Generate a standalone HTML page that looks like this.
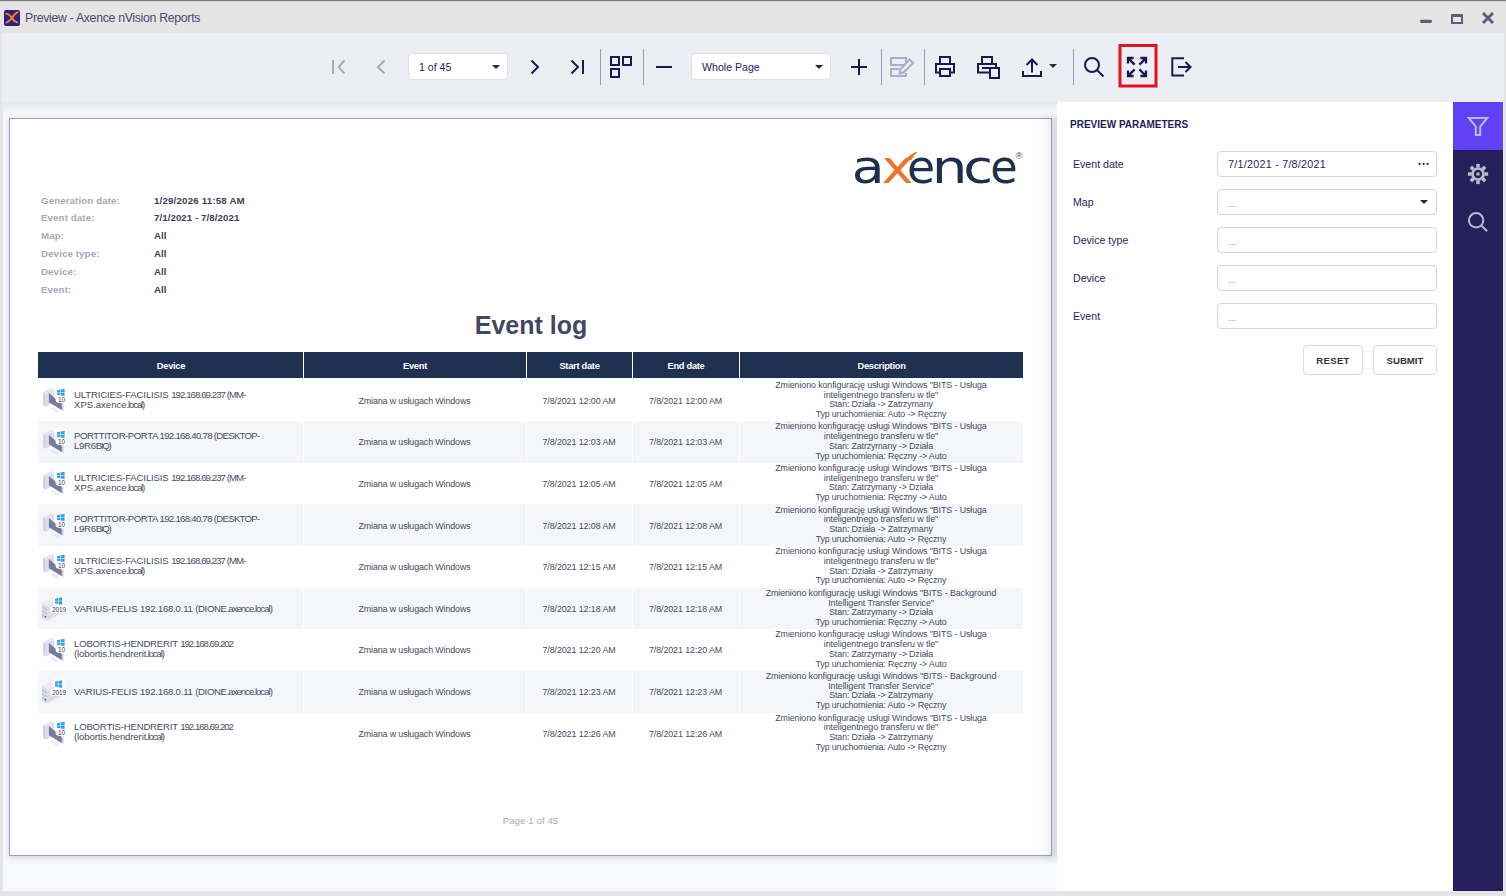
<!DOCTYPE html>
<html lang="en">
<head>
<meta charset="utf-8">
<title>Preview - Axence nVision Reports</title>
<style>
*{box-sizing:border-box;margin:0;padding:0}
html,body{width:1506px;height:896px;overflow:hidden}
body{position:relative;background:#e5e5e5;font-family:"Liberation Sans",sans-serif;color:#2a2456}
.abs{position:absolute}
/* title bar */
#topline{left:0;top:0;width:1506px;height:2px;background:linear-gradient(#6e6e6e,#8a8a8a 45%,#dadada 80%,#e5e5e5)}
#titlebar{left:0;top:2px;width:1506px;height:31px;background:#e5e5e5}
#appicon{left:4px;top:10px;width:16px;height:16px;border-radius:2px;background:#2a2180}
#title{left:25px;top:10px;font-size:12.3px;line-height:16px;color:#4d4574;white-space:nowrap;letter-spacing:-0.31px}
/* toolbar */
#toolbar{left:2px;top:33px;width:1502px;height:858px;background:#eceef4}
#lstrip{left:2px;top:102px;width:1px;height:789px;background:#e7e8ec}
.combo{position:absolute;top:53px;height:27px;background:#fff;border:1px solid #dfe0e8;border-radius:4px;font-size:10.6px;line-height:27px;color:#2a2456;padding-left:9px;white-space:nowrap}
.caret{position:absolute;width:0;height:0;border-left:4px solid transparent;border-right:4px solid transparent;border-top:4.5px solid #2b2b33}
.sep{position:absolute;top:49px;width:1px;height:36px;background:#9a99b8}
svg.ic{position:absolute;overflow:visible}
/* doc area */
#docarea{left:3px;top:102px;width:1054px;height:789px;background:#f8f9fe}
#docshadow{left:3px;top:102px;width:1054px;height:14px;background:linear-gradient(#e6e8ef,#f0f1f7 45%,#f8f9fe)}
#rshadow{left:1035px;top:112px;width:22px;height:752px;background:linear-gradient(90deg,rgba(110,115,140,0),rgba(110,115,140,.05) 50%,rgba(110,115,140,.2));-webkit-mask-image:linear-gradient(180deg,transparent,#000 8px,#000 calc(100% - 9px),transparent);mask-image:linear-gradient(180deg,transparent,#000 8px,#000 calc(100% - 9px),transparent)}
#page{left:9px;top:118px;width:1043px;height:738px;background:#fff;border:1px solid #9fa1a7;box-shadow:0 0 6px rgba(150,155,175,.2), 0 3px 6px rgba(150,155,175,.2)}
/* report */
.lbl,.val{position:absolute;font-weight:bold;font-size:9.7px;line-height:12px;white-space:nowrap}
.lbl{left:41px;color:#a6a9b8;letter-spacing:0.12px}
.val{left:154px;color:#3b3f58;letter-spacing:0.03px}
#rtitle{left:331px;top:309.7px;width:400px;text-align:center;font-weight:bold;font-size:25px;letter-spacing:0;line-height:30px;color:#444761;white-space:nowrap}
#thead{left:38px;top:352px;width:985px;height:26px;background:#1f3150}
.th{position:absolute;top:1px;height:26px;line-height:27px;text-align:center;color:#fff;font-weight:bold;font-size:9.3px;white-space:nowrap;letter-spacing:-0.28px;padding-left:1px}
.vs{position:absolute;top:0;width:1px;height:26px;background:#fff}
.row{position:absolute;left:38px;width:985px;background:#fff}
.row.alt{background:#f5f6f9}
.c{position:absolute;top:0;height:100%;color:#474b62;font-size:8.9px;white-space:nowrap}
.row.alt .c{box-shadow:inset 1px 0 0 #fff}
.row.alt .c1{box-shadow:none}
.c1{left:0;width:265px}
.c2{left:265px;width:223px}
.c3{left:488px;width:106px}
.c4{left:594px;width:107px}
.c5{left:701px;width:284px}
.c2 span,.c3 span,.c4 span{position:absolute;left:0;width:100%;text-align:center;line-height:10px}
.c2 span{letter-spacing:-0.114px}
.c3 span,.c4 span{letter-spacing:-0.076px}
.dicon{position:absolute;left:4px}
.dev{position:absolute;left:36px;font-size:9.6px;line-height:10px}
.desc{position:absolute;left:0;width:100%;text-align:center;line-height:9.73px}
.desc div{height:9.73px}
#pfoot{left:330.5px;top:815px;width:400px;text-align:center;font-size:9.6px;line-height:12px;color:#a9acba;letter-spacing:0.1px}
/* right panel */
#panel{left:1057px;top:102px;width:396px;height:789px;background:#fff}
#ptitle{left:1070px;top:119.4px;font-weight:bold;font-size:10px;line-height:12px;color:#231d54;letter-spacing:0;white-space:nowrap}
.plabel{position:absolute;left:1073px;font-size:10.6px;line-height:14px;color:#2a2456;white-space:nowrap}
.pin{position:absolute;left:1217px;width:220px;height:26px;border:1px solid #d6d6dc;border-radius:4px;background:#fff;font-size:10.8px;line-height:24px;padding-left:10px;color:#2a2456;white-space:nowrap;letter-spacing:0.23px}
.pin.ph{color:#7d7d94;font-size:9px;line-height:28px}
.btn{position:absolute;top:345px;height:30px;border:1px solid #d9d9de;border-radius:4px;background:#fff;font-weight:bold;font-size:9.6px;line-height:29px;text-align:center;color:#333;letter-spacing:0.3px}
/* side bar */
#sidebar{left:1453px;top:102px;width:50px;height:789px;background:#271f5c}
#sideactive{left:1453px;top:102px;width:50px;height:48px;background:#6041f3}
</style>
</head>
<body>
<div class="abs" id="titlebar"></div>
<div class="abs" id="topline"></div>
<div class="abs" id="appicon"><svg width="16" height="16" viewBox="0 0 16 16"><path d="M2.2 3.6 C5 4.2 7 6.2 8 8 C9 9.8 11 11.8 13.2 12.4 M2.4 12.6 C5 11.6 6.8 9.8 8 8 C9.3 6 11.2 3.4 13.6 2.2" stroke="#ff7a1a" stroke-width="1.9" fill="none" stroke-linecap="round"/></svg></div>
<div class="abs" id="title">Preview - Axence nVision Reports</div>
<!-- window controls -->
<svg class="ic" style="left:1416px;top:8px" width="84" height="20" viewBox="1416 8 84 20">
<rect x="1420" y="19.8" width="12" height="3.2" rx="1.4" fill="#5b5f78"/>
<path d="M1451 14 h12 v10 h-12 Z M1453 17 v5 h8 v-5 Z" fill="#5b5f78" fill-rule="evenodd"/>
<path d="M1483 13 L1493 23 M1493 13 L1483 23" stroke="#5b5f78" stroke-width="3" fill="none"/>
</svg>

<div class="abs" id="toolbar"></div>
<!-- toolbar icons -->
<svg class="ic" style="left:300px;top:40px" width="920" height="56" viewBox="300 40 920 56" fill="none" stroke="#1f1752" stroke-width="2">
 <g stroke="#a9a7c6">
  <path d="M333 60 V74 M344.5 60.5 L338.5 67 L344.5 73.5"/>
  <path d="M384.5 60.5 L378 67 L384.5 73.5"/>
 </g>
 <path d="M531.5 60.5 L538 67 L531.5 73.5"/>
 <path d="M571.5 60.5 L578 67 L571.5 73.5 M583 60 V74"/>
 <rect x="611" y="57" width="8" height="8"/><rect x="623" y="57" width="8" height="8"/><rect x="611" y="69" width="8" height="8"/>
 <path d="M656 67 H672"/>
 <path d="M851 67 H867 M859 59 V75"/>
 <g stroke="#adabc9">
  <rect x="891" y="58" width="15" height="7"/><path d="M899 69 H891 V76 H906 V73"/>
  <path d="M909.5 59.5 L913 63 L903.5 72.5 L899.5 73.5 L900.5 69 Z" fill="#eceef4"/>
 </g>
 <path d="M940 63.5 V57 H950 V63.5 M940 72.5 H936 V64 H954 V72.5 H950 M940 69 H950 V76 H940 Z"/>
 <path d="M982 63.5 V57 H992 V63.5 M990 72.5 H978 V64 H996 V68 M982 68 H989"/>
 <rect x="990" y="68" width="9" height="10" fill="#eceef4"/>
 <path d="M1023 71 V76 H1041 V71 M1032 72.5 V59.5 M1026.5 65 L1032 59.5 L1037.5 65"/>
 <circle cx="1092" cy="65" r="7"/><path d="M1097 70 L1103.5 76.5"/>
 <rect x="1120" y="45.5" width="36" height="40.5" stroke="#e2141a" stroke-width="3"/>
 <path stroke-width="2.3" d="M1128 63.6 V58 H1133.6 M1128.6 58.6 L1134.6 64.6 M1140.4 58 H1146 V63.6 M1145.4 58.6 L1139.4 64.6 M1128 70.4 V76 H1133.6 M1128.6 75.4 L1134.6 69.4 M1146 70.4 V76 H1140.4 M1145.4 75.4 L1139.4 69.4"/>
 <path d="M1184 58.3 H1172.3 V75.5 H1184 M1178 67 H1190.5 M1185.5 62 L1190.5 67 L1185.5 72"/>
</svg>
<div class="sep" style="left:600px"></div>
<div class="sep" style="left:643px"></div>
<div class="sep" style="left:881px"></div>
<div class="sep" style="left:924px"></div>
<div class="sep" style="left:1073px"></div>
<div class="combo" style="left:408px;width:99.5px;padding-left:10px">1 of 45</div>
<div class="caret" style="left:491.5px;top:65px"></div>
<div class="combo" style="left:691px;width:139.5px;padding-left:10px">Whole Page</div>
<div class="caret" style="left:814.5px;top:65px"></div>
<div class="caret" style="left:1049px;top:64px"></div>

<!-- document area -->
<div class="abs" id="lstrip"></div>
<div class="abs" id="docarea"></div>
<div class="abs" id="docshadow"></div>
<div class="abs" id="page"></div>
<div class="abs" id="rshadow"></div>

<!-- logo -->
<svg class="ic" style="left:845px;top:140px" width="190" height="56" viewBox="845 140 190 56" font-family="DejaVu Sans, Liberation Sans, sans-serif" font-weight="400" font-size="46.8">
 <text transform="translate(851.66 182.5) scale(1.145 1)" fill="#1e2f4e">a</text>
 <text transform="translate(907.09 182.5) scale(0.971 1)" fill="#1e2f4e">e</text>
 <text transform="translate(931.68 182.5) scale(1.205 1)" fill="#1e2f4e">n</text>
 <text transform="translate(963.32 182.5) scale(1.16 1)" fill="#1e2f4e">c</text>
 <text transform="translate(990.35 182.5) scale(0.95 1)" fill="#1e2f4e">e</text>
 <text transform="translate(881.49 182.5) scale(1.154 1)" fill="#e8762c">x</text>
 <path d="M904.6 160.2 L911.2 160.2 C913 157 915 154.4 917.2 152.6 L916.6 151.7 C912 153.4 908 156.4 904.6 160.2 Z" fill="#e8762c"/>
 <text x="1015.6" y="159.4" font-family="Liberation Sans, sans-serif" font-size="9.5" fill="#3a4a66">®</text>
</svg>

<div class="lbl" style="top:195px">Generation date:</div><div class="val" style="top:195px;letter-spacing:0.19px">1/29/2026 11:58 AM</div>
<div class="lbl" style="top:212px">Event date:</div><div class="val" style="top:212px;letter-spacing:0.07px">7/1/2021 - 7/8/2021</div>
<div class="lbl" style="top:230px">Map:</div><div class="val" style="top:230px">All</div>
<div class="lbl" style="top:248px">Device type:</div><div class="val" style="top:248px">All</div>
<div class="lbl" style="top:266px">Device:</div><div class="val" style="top:266px">All</div>
<div class="lbl" style="top:284px">Event:</div><div class="val" style="top:284px">All</div>

<div class="abs" id="rtitle">Event log</div>
<div class="abs" id="thead">
 <div class="th" style="left:0;width:265px">Device</div>
 <div class="th" style="left:265px;width:223px">Event</div>
 <div class="th" style="left:488px;width:106px">Start date</div>
 <div class="th" style="left:594px;width:107px">End date</div>
 <div class="th" style="left:701px;width:284px">Description</div>
 <div class="vs" style="left:265px"></div><div class="vs" style="left:488px"></div><div class="vs" style="left:594px"></div><div class="vs" style="left:701px"></div>
</div>
<div class="row" style="top:378px;height:43px">
<div class="c c1"><svg class="dicon" style="top:8.00px" width="30" height="30" viewBox="0 0 30 30">
<polygon points="1.1,6 9.2,2 11.9,3.5 3.8,7.7" fill="#e6e7f1"/>
<polygon points="1.1,6 3.8,7.7 3.8,20.8 1.1,19" fill="#cfd0e2"/>
<polygon points="3.8,7.7 11.9,3.5 11.9,16 3.8,20.8" fill="#dcdded"/>
<polygon points="8,22.6 10.6,21 17.2,25.2 14.6,26.8" fill="#e9eaf3"/>
<polygon points="6.9,7 19.9,18 19.9,24.2 6.9,16.3" fill="#767b9e"/>
<polygon points="19.9,18 21.5,17.3 21.5,25.2 19.9,24.2" fill="#cdcee0"/>
<rect x="13.6" y="0.7" width="11.2" height="16.1" rx="3" fill="#fff"/>
<path d="M15 4.3 L18.2 3.6 V6.2 H15 Z M18.7 3.5 L22.6 2.7 V6.2 H18.7 Z M15 6.7 H18.2 V9.3 L15 8.7 Z M18.7 6.7 H22.6 V10.1 L18.7 9.4 Z" fill="#35a2ee"/>
<text x="19.5" y="15.9" text-anchor="middle" font-family="Liberation Sans, sans-serif" font-size="6.3" fill="#3c3c46">10</text>
</svg><div class="dev" style="top:11.57px"><span style="letter-spacing:-0.145px">ULTRICIES-FACILISIS </span><span style="letter-spacing:-0.92px">192.168.69.237 (MM-</span><br><span style="letter-spacing:-0.02px">XPS.axence</span><span style="letter-spacing:-1.15px">.local)</span></div></div>
<div class="c c2"><span style="top:17.82px">Zmiana w usługach Windows</span></div>
<div class="c c3"><span style="top:17.82px">7/8/2021 12:00 AM</span></div>
<div class="c c4"><span style="top:17.82px">7/8/2021 12:00 AM</span></div>
<div class="c c5"><div class="desc" style="top:2.85px"><div style="letter-spacing:-0.103px">Zmieniono konfigurację usługi Windows &quot;BITS - Usługa</div><div style="letter-spacing:-0.071px">inteligentnego transferu w tle&quot;</div><div style="letter-spacing:-0.147px">Stan: Działa -&gt; Zatrzymany</div><div style="letter-spacing:-0.146px">Typ uruchomienia: Auto -&gt; Ręczny</div></div></div>
</div>
<div class="row alt" style="top:421px;height:42px">
<div class="c c1"><svg class="dicon" style="top:6.60px" width="30" height="30" viewBox="0 0 30 30">
<polygon points="1.1,6 9.2,2 11.9,3.5 3.8,7.7" fill="#e6e7f1"/>
<polygon points="1.1,6 3.8,7.7 3.8,20.8 1.1,19" fill="#cfd0e2"/>
<polygon points="3.8,7.7 11.9,3.5 11.9,16 3.8,20.8" fill="#dcdded"/>
<polygon points="8,22.6 10.6,21 17.2,25.2 14.6,26.8" fill="#e9eaf3"/>
<polygon points="6.9,7 19.9,18 19.9,24.2 6.9,16.3" fill="#767b9e"/>
<polygon points="19.9,18 21.5,17.3 21.5,25.2 19.9,24.2" fill="#cdcee0"/>
<rect x="13.6" y="0.7" width="11.2" height="16.1" rx="3" fill="#fff"/>
<path d="M15 4.3 L18.2 3.6 V6.2 H15 Z M18.7 3.5 L22.6 2.7 V6.2 H18.7 Z M15 6.7 H18.2 V9.3 L15 8.7 Z M18.7 6.7 H22.6 V10.1 L18.7 9.4 Z" fill="#35a2ee"/>
<text x="19.5" y="15.9" text-anchor="middle" font-family="Liberation Sans, sans-serif" font-size="6.3" fill="#3c3c46">10</text>
</svg><div class="dev" style="top:10.17px"><span style="letter-spacing:-0.44px">PORTTITOR-PORTA </span><span style="letter-spacing:-0.7px">192.168.40.78 (DESKTOP-</span><br><span style="letter-spacing:-0.3px">L9R6</span><span style="letter-spacing:-1.25px">BIQ)</span></div></div>
<div class="c c2"><span style="top:16.42px">Zmiana w usługach Windows</span></div>
<div class="c c3"><span style="top:16.42px">7/8/2021 12:03 AM</span></div>
<div class="c c4"><span style="top:16.42px">7/8/2021 12:03 AM</span></div>
<div class="c c5"><div class="desc" style="top:1.45px"><div style="letter-spacing:-0.103px">Zmieniono konfigurację usługi Windows &quot;BITS - Usługa</div><div style="letter-spacing:-0.071px">inteligentnego transferu w tle&quot;</div><div style="letter-spacing:-0.131px">Stan: Zatrzymany -&gt; Działa</div><div style="letter-spacing:-0.133px">Typ uruchomienia: Ręczny -&gt; Auto</div></div></div>
</div>
<div class="row" style="top:463px;height:41px">
<div class="c c1"><svg class="dicon" style="top:6.20px" width="30" height="30" viewBox="0 0 30 30">
<polygon points="1.1,6 9.2,2 11.9,3.5 3.8,7.7" fill="#e6e7f1"/>
<polygon points="1.1,6 3.8,7.7 3.8,20.8 1.1,19" fill="#cfd0e2"/>
<polygon points="3.8,7.7 11.9,3.5 11.9,16 3.8,20.8" fill="#dcdded"/>
<polygon points="8,22.6 10.6,21 17.2,25.2 14.6,26.8" fill="#e9eaf3"/>
<polygon points="6.9,7 19.9,18 19.9,24.2 6.9,16.3" fill="#767b9e"/>
<polygon points="19.9,18 21.5,17.3 21.5,25.2 19.9,24.2" fill="#cdcee0"/>
<rect x="13.6" y="0.7" width="11.2" height="16.1" rx="3" fill="#fff"/>
<path d="M15 4.3 L18.2 3.6 V6.2 H15 Z M18.7 3.5 L22.6 2.7 V6.2 H18.7 Z M15 6.7 H18.2 V9.3 L15 8.7 Z M18.7 6.7 H22.6 V10.1 L18.7 9.4 Z" fill="#35a2ee"/>
<text x="19.5" y="15.9" text-anchor="middle" font-family="Liberation Sans, sans-serif" font-size="6.3" fill="#3c3c46">10</text>
</svg><div class="dev" style="top:9.77px"><span style="letter-spacing:-0.145px">ULTRICIES-FACILISIS </span><span style="letter-spacing:-0.92px">192.168.69.237 (MM-</span><br><span style="letter-spacing:-0.02px">XPS.axence</span><span style="letter-spacing:-1.15px">.local)</span></div></div>
<div class="c c2"><span style="top:16.02px">Zmiana w usługach Windows</span></div>
<div class="c c3"><span style="top:16.02px">7/8/2021 12:05 AM</span></div>
<div class="c c4"><span style="top:16.02px">7/8/2021 12:05 AM</span></div>
<div class="c c5"><div class="desc" style="top:1.05px"><div style="letter-spacing:-0.103px">Zmieniono konfigurację usługi Windows &quot;BITS - Usługa</div><div style="letter-spacing:-0.071px">inteligentnego transferu w tle&quot;</div><div style="letter-spacing:-0.131px">Stan: Zatrzymany -&gt; Działa</div><div style="letter-spacing:-0.133px">Typ uruchomienia: Ręczny -&gt; Auto</div></div></div>
</div>
<div class="row alt" style="top:504px;height:42px">
<div class="c c1"><svg class="dicon" style="top:6.80px" width="30" height="30" viewBox="0 0 30 30">
<polygon points="1.1,6 9.2,2 11.9,3.5 3.8,7.7" fill="#e6e7f1"/>
<polygon points="1.1,6 3.8,7.7 3.8,20.8 1.1,19" fill="#cfd0e2"/>
<polygon points="3.8,7.7 11.9,3.5 11.9,16 3.8,20.8" fill="#dcdded"/>
<polygon points="8,22.6 10.6,21 17.2,25.2 14.6,26.8" fill="#e9eaf3"/>
<polygon points="6.9,7 19.9,18 19.9,24.2 6.9,16.3" fill="#767b9e"/>
<polygon points="19.9,18 21.5,17.3 21.5,25.2 19.9,24.2" fill="#cdcee0"/>
<rect x="13.6" y="0.7" width="11.2" height="16.1" rx="3" fill="#fff"/>
<path d="M15 4.3 L18.2 3.6 V6.2 H15 Z M18.7 3.5 L22.6 2.7 V6.2 H18.7 Z M15 6.7 H18.2 V9.3 L15 8.7 Z M18.7 6.7 H22.6 V10.1 L18.7 9.4 Z" fill="#35a2ee"/>
<text x="19.5" y="15.9" text-anchor="middle" font-family="Liberation Sans, sans-serif" font-size="6.3" fill="#3c3c46">10</text>
</svg><div class="dev" style="top:10.37px"><span style="letter-spacing:-0.44px">PORTTITOR-PORTA </span><span style="letter-spacing:-0.7px">192.168.40.78 (DESKTOP-</span><br><span style="letter-spacing:-0.3px">L9R6</span><span style="letter-spacing:-1.25px">BIQ)</span></div></div>
<div class="c c2"><span style="top:16.62px">Zmiana w usługach Windows</span></div>
<div class="c c3"><span style="top:16.62px">7/8/2021 12:08 AM</span></div>
<div class="c c4"><span style="top:16.62px">7/8/2021 12:08 AM</span></div>
<div class="c c5"><div class="desc" style="top:1.65px"><div style="letter-spacing:-0.103px">Zmieniono konfigurację usługi Windows &quot;BITS - Usługa</div><div style="letter-spacing:-0.071px">inteligentnego transferu w tle&quot;</div><div style="letter-spacing:-0.147px">Stan: Działa -&gt; Zatrzymany</div><div style="letter-spacing:-0.146px">Typ uruchomienia: Auto -&gt; Ręczny</div></div></div>
</div>
<div class="row" style="top:546px;height:42px">
<div class="c c1"><svg class="dicon" style="top:6.40px" width="30" height="30" viewBox="0 0 30 30">
<polygon points="1.1,6 9.2,2 11.9,3.5 3.8,7.7" fill="#e6e7f1"/>
<polygon points="1.1,6 3.8,7.7 3.8,20.8 1.1,19" fill="#cfd0e2"/>
<polygon points="3.8,7.7 11.9,3.5 11.9,16 3.8,20.8" fill="#dcdded"/>
<polygon points="8,22.6 10.6,21 17.2,25.2 14.6,26.8" fill="#e9eaf3"/>
<polygon points="6.9,7 19.9,18 19.9,24.2 6.9,16.3" fill="#767b9e"/>
<polygon points="19.9,18 21.5,17.3 21.5,25.2 19.9,24.2" fill="#cdcee0"/>
<rect x="13.6" y="0.7" width="11.2" height="16.1" rx="3" fill="#fff"/>
<path d="M15 4.3 L18.2 3.6 V6.2 H15 Z M18.7 3.5 L22.6 2.7 V6.2 H18.7 Z M15 6.7 H18.2 V9.3 L15 8.7 Z M18.7 6.7 H22.6 V10.1 L18.7 9.4 Z" fill="#35a2ee"/>
<text x="19.5" y="15.9" text-anchor="middle" font-family="Liberation Sans, sans-serif" font-size="6.3" fill="#3c3c46">10</text>
</svg><div class="dev" style="top:9.97px"><span style="letter-spacing:-0.145px">ULTRICIES-FACILISIS </span><span style="letter-spacing:-0.92px">192.168.69.237 (MM-</span><br><span style="letter-spacing:-0.02px">XPS.axence</span><span style="letter-spacing:-1.15px">.local)</span></div></div>
<div class="c c2"><span style="top:16.22px">Zmiana w usługach Windows</span></div>
<div class="c c3"><span style="top:16.22px">7/8/2021 12:15 AM</span></div>
<div class="c c4"><span style="top:16.22px">7/8/2021 12:15 AM</span></div>
<div class="c c5"><div class="desc" style="top:1.25px"><div style="letter-spacing:-0.103px">Zmieniono konfigurację usługi Windows &quot;BITS - Usługa</div><div style="letter-spacing:-0.071px">inteligentnego transferu w tle&quot;</div><div style="letter-spacing:-0.147px">Stan: Działa -&gt; Zatrzymany</div><div style="letter-spacing:-0.146px">Typ uruchomienia: Auto -&gt; Ręczny</div></div></div>
</div>
<div class="row alt" style="top:588px;height:41px">
<div class="c c1"><svg class="dicon" style="top:6.00px" width="30" height="30" viewBox="0 0 30 30">
<polygon points="0,9.2 13,1.6 20.3,4.6 5.2,12.2" fill="#ececf4"/>
<polygon points="0,9.2 5.2,12.2 5.2,27 0,24" fill="#d9dae8"/>
<polygon points="5.2,12.2 20.3,4.6 20.3,19 5.2,27" fill="#e2e3ee"/>
<path d="M0 13 L5.2 16 M0 16.7 L5.2 19.7 M0 20.4 L5.2 23.4" stroke="#b9bbd4" stroke-width="0.9" fill="none"/>
<path d="M5.2 16 L20.3 8.4 M5.2 19.7 L20.3 12.1 M5.2 23.4 L20.3 15.8" stroke="#c9cbe0" stroke-width="0.9" fill="none"/>
<circle cx="3.3" cy="22.8" r="0.7" fill="#333"/>
<rect x="11" y="1.1" width="11.6" height="11.5" rx="4" fill="#fff"/>
<rect x="8.3" y="11.6" width="17" height="7.2" rx="2.5" fill="#fff"/>
<path d="M13 4.7 L16.1 4.1 V6.8 H13 Z M16.6 4 L20.1 3.2 V6.8 H16.6 Z M13 7.3 H16.1 V10.1 L13 9.5 Z M16.6 7.3 H20.1 V11 L16.6 10.2 Z" fill="#35a2ee"/>
<text x="16.95" y="17.9" text-anchor="middle" font-family="Liberation Sans, sans-serif" font-size="6.5" fill="#3c3c46" letter-spacing="-0.1">2019</text>
</svg><div class="dev" style="top:15.77px"><span style="letter-spacing:-0.12px">VARIUS-FELIS </span><span style="letter-spacing:-0.215px">192.168.0.11 </span><span style="letter-spacing:-0.35px">(DIONE</span><span style="letter-spacing:-1.0px">.axence.local)</span></div></div>
<div class="c c2"><span style="top:15.82px">Zmiana w usługach Windows</span></div>
<div class="c c3"><span style="top:15.82px">7/8/2021 12:18 AM</span></div>
<div class="c c4"><span style="top:15.82px">7/8/2021 12:18 AM</span></div>
<div class="c c5"><div class="desc" style="top:0.85px"><div style="letter-spacing:-0.107px">Zmieniono konfigurację usługi Windows &quot;BITS - Background</div><div style="letter-spacing:-0.091px">Intelligent Transfer Service&quot;</div><div style="letter-spacing:-0.131px">Stan: Zatrzymany -&gt; Działa</div><div style="letter-spacing:-0.133px">Typ uruchomienia: Ręczny -&gt; Auto</div></div></div>
</div>
<div class="row" style="top:629px;height:42px">
<div class="c c1"><svg class="dicon" style="top:6.60px" width="30" height="30" viewBox="0 0 30 30">
<polygon points="1.1,6 9.2,2 11.9,3.5 3.8,7.7" fill="#e6e7f1"/>
<polygon points="1.1,6 3.8,7.7 3.8,20.8 1.1,19" fill="#cfd0e2"/>
<polygon points="3.8,7.7 11.9,3.5 11.9,16 3.8,20.8" fill="#dcdded"/>
<polygon points="8,22.6 10.6,21 17.2,25.2 14.6,26.8" fill="#e9eaf3"/>
<polygon points="6.9,7 19.9,18 19.9,24.2 6.9,16.3" fill="#767b9e"/>
<polygon points="19.9,18 21.5,17.3 21.5,25.2 19.9,24.2" fill="#cdcee0"/>
<rect x="13.6" y="0.7" width="11.2" height="16.1" rx="3" fill="#fff"/>
<path d="M15 4.3 L18.2 3.6 V6.2 H15 Z M18.7 3.5 L22.6 2.7 V6.2 H18.7 Z M15 6.7 H18.2 V9.3 L15 8.7 Z M18.7 6.7 H22.6 V10.1 L18.7 9.4 Z" fill="#35a2ee"/>
<text x="19.5" y="15.9" text-anchor="middle" font-family="Liberation Sans, sans-serif" font-size="6.3" fill="#3c3c46">10</text>
</svg><div class="dev" style="top:10.17px"><span style="letter-spacing:-0.2px">LOBORTIS-HENDRERIT </span><span style="letter-spacing:-1.0px">192.168.69.202</span><br><span style="letter-spacing:-0.13px">(lobortis.hendrerit</span><span style="letter-spacing:-1.15px">.local)</span></div></div>
<div class="c c2"><span style="top:16.42px">Zmiana w usługach Windows</span></div>
<div class="c c3"><span style="top:16.42px">7/8/2021 12:20 AM</span></div>
<div class="c c4"><span style="top:16.42px">7/8/2021 12:20 AM</span></div>
<div class="c c5"><div class="desc" style="top:1.45px"><div style="letter-spacing:-0.103px">Zmieniono konfigurację usługi Windows &quot;BITS - Usługa</div><div style="letter-spacing:-0.071px">inteligentnego transferu w tle&quot;</div><div style="letter-spacing:-0.131px">Stan: Zatrzymany -&gt; Działa</div><div style="letter-spacing:-0.133px">Typ uruchomienia: Ręczny -&gt; Auto</div></div></div>
</div>
<div class="row alt" style="top:671px;height:42px">
<div class="c c1"><svg class="dicon" style="top:6.20px" width="30" height="30" viewBox="0 0 30 30">
<polygon points="0,9.2 13,1.6 20.3,4.6 5.2,12.2" fill="#ececf4"/>
<polygon points="0,9.2 5.2,12.2 5.2,27 0,24" fill="#d9dae8"/>
<polygon points="5.2,12.2 20.3,4.6 20.3,19 5.2,27" fill="#e2e3ee"/>
<path d="M0 13 L5.2 16 M0 16.7 L5.2 19.7 M0 20.4 L5.2 23.4" stroke="#b9bbd4" stroke-width="0.9" fill="none"/>
<path d="M5.2 16 L20.3 8.4 M5.2 19.7 L20.3 12.1 M5.2 23.4 L20.3 15.8" stroke="#c9cbe0" stroke-width="0.9" fill="none"/>
<circle cx="3.3" cy="22.8" r="0.7" fill="#333"/>
<rect x="11" y="1.1" width="11.6" height="11.5" rx="4" fill="#fff"/>
<rect x="8.3" y="11.6" width="17" height="7.2" rx="2.5" fill="#fff"/>
<path d="M13 4.7 L16.1 4.1 V6.8 H13 Z M16.6 4 L20.1 3.2 V6.8 H16.6 Z M13 7.3 H16.1 V10.1 L13 9.5 Z M16.6 7.3 H20.1 V11 L16.6 10.2 Z" fill="#35a2ee"/>
<text x="16.95" y="17.9" text-anchor="middle" font-family="Liberation Sans, sans-serif" font-size="6.5" fill="#3c3c46" letter-spacing="-0.1">2019</text>
</svg><div class="dev" style="top:15.97px"><span style="letter-spacing:-0.12px">VARIUS-FELIS </span><span style="letter-spacing:-0.215px">192.168.0.11 </span><span style="letter-spacing:-0.35px">(DIONE</span><span style="letter-spacing:-1.0px">.axence.local)</span></div></div>
<div class="c c2"><span style="top:16.02px">Zmiana w usługach Windows</span></div>
<div class="c c3"><span style="top:16.02px">7/8/2021 12:23 AM</span></div>
<div class="c c4"><span style="top:16.02px">7/8/2021 12:23 AM</span></div>
<div class="c c5"><div class="desc" style="top:1.05px"><div style="letter-spacing:-0.107px">Zmieniono konfigurację usługi Windows &quot;BITS - Background</div><div style="letter-spacing:-0.091px">Intelligent Transfer Service&quot;</div><div style="letter-spacing:-0.147px">Stan: Działa -&gt; Zatrzymany</div><div style="letter-spacing:-0.146px">Typ uruchomienia: Auto -&gt; Ręczny</div></div></div>
</div>
<div class="row" style="top:713px;height:41px">
<div class="c c1"><svg class="dicon" style="top:5.80px" width="30" height="30" viewBox="0 0 30 30">
<polygon points="1.1,6 9.2,2 11.9,3.5 3.8,7.7" fill="#e6e7f1"/>
<polygon points="1.1,6 3.8,7.7 3.8,20.8 1.1,19" fill="#cfd0e2"/>
<polygon points="3.8,7.7 11.9,3.5 11.9,16 3.8,20.8" fill="#dcdded"/>
<polygon points="8,22.6 10.6,21 17.2,25.2 14.6,26.8" fill="#e9eaf3"/>
<polygon points="6.9,7 19.9,18 19.9,24.2 6.9,16.3" fill="#767b9e"/>
<polygon points="19.9,18 21.5,17.3 21.5,25.2 19.9,24.2" fill="#cdcee0"/>
<rect x="13.6" y="0.7" width="11.2" height="16.1" rx="3" fill="#fff"/>
<path d="M15 4.3 L18.2 3.6 V6.2 H15 Z M18.7 3.5 L22.6 2.7 V6.2 H18.7 Z M15 6.7 H18.2 V9.3 L15 8.7 Z M18.7 6.7 H22.6 V10.1 L18.7 9.4 Z" fill="#35a2ee"/>
<text x="19.5" y="15.9" text-anchor="middle" font-family="Liberation Sans, sans-serif" font-size="6.3" fill="#3c3c46">10</text>
</svg><div class="dev" style="top:9.37px"><span style="letter-spacing:-0.2px">LOBORTIS-HENDRERIT </span><span style="letter-spacing:-1.0px">192.168.69.202</span><br><span style="letter-spacing:-0.13px">(lobortis.hendrerit</span><span style="letter-spacing:-1.15px">.local)</span></div></div>
<div class="c c2"><span style="top:15.62px">Zmiana w usługach Windows</span></div>
<div class="c c3"><span style="top:15.62px">7/8/2021 12:26 AM</span></div>
<div class="c c4"><span style="top:15.62px">7/8/2021 12:26 AM</span></div>
<div class="c c5"><div class="desc" style="top:0.65px"><div style="letter-spacing:-0.103px">Zmieniono konfigurację usługi Windows &quot;BITS - Usługa</div><div style="letter-spacing:-0.071px">inteligentnego transferu w tle&quot;</div><div style="letter-spacing:-0.147px">Stan: Działa -&gt; Zatrzymany</div><div style="letter-spacing:-0.146px">Typ uruchomienia: Auto -&gt; Ręczny</div></div></div>
</div>
<div class="abs" id="pfoot">Page 1 of 45</div>

<!-- right panel -->
<div class="abs" id="panel"></div>
<div class="abs" id="ptitle">PREVIEW PARAMETERS</div>
<div class="plabel" style="top:157px">Event date</div>
<div class="plabel" style="top:195px">Map</div>
<div class="plabel" style="top:233px">Device type</div>
<div class="plabel" style="top:271px">Device</div>
<div class="plabel" style="top:309px">Event</div>
<div class="pin" style="top:151px">7/1/2021 - 7/8/2021</div>
<div class="pin ph" style="top:189px">...</div>
<div class="pin ph" style="top:227px">...</div>
<div class="pin ph" style="top:265px">...</div>
<div class="pin ph" style="top:303px">...</div>
<svg class="ic" style="left:1416px;top:160px" width="16" height="8" viewBox="0 0 16 8"><circle cx="3.6" cy="3.8" r="1.1" fill="#1f1752"/><circle cx="7.6" cy="3.8" r="1.1" fill="#1f1752"/><circle cx="11.6" cy="3.8" r="1.1" fill="#1f1752"/></svg>
<div class="caret" style="left:1419.5px;top:199.5px"></div>
<div class="btn" style="left:1303px;width:60px">RESET</div>
<div class="btn" style="left:1373px;width:64px;letter-spacing:0">SUBMIT</div>

<!-- side bar -->
<div class="abs" id="sidebar"></div>
<div class="abs" id="sideactive"></div>
<svg class="ic" style="left:1453px;top:102px" width="50" height="150" viewBox="0 0 50 150" fill="none" stroke="#b6bdcd" stroke-width="2">
 <path d="M15.8 16 H34.2 L27.2 24.6 V33 H22.8 V24.6 Z" stroke-linejoin="miter"/>
 <g transform="translate(25,72)">
  <circle r="5.5" stroke-width="2.7"/>
  <circle r="1.8" fill="#b6bdcd" stroke="none"/>
  <g stroke-width="3.5">
   <path d="M0 -6.5 V-10.1"/><path d="M0 6.5 V10.1"/><path d="M-6.5 0 H-10.1"/><path d="M6.5 0 H10.1"/>
   <path d="M4.6 -4.6 L7.15 -7.15"/><path d="M-4.6 4.6 L-7.15 7.15"/><path d="M-4.6 -4.6 L-7.15 -7.15"/><path d="M4.6 4.6 L7.15 7.15"/>
  </g>
 </g>
 <circle cx="23.1" cy="118.3" r="7.2"/><path d="M28.3 123.5 L34.2 129.2"/>
</svg>
</body>
</html>
